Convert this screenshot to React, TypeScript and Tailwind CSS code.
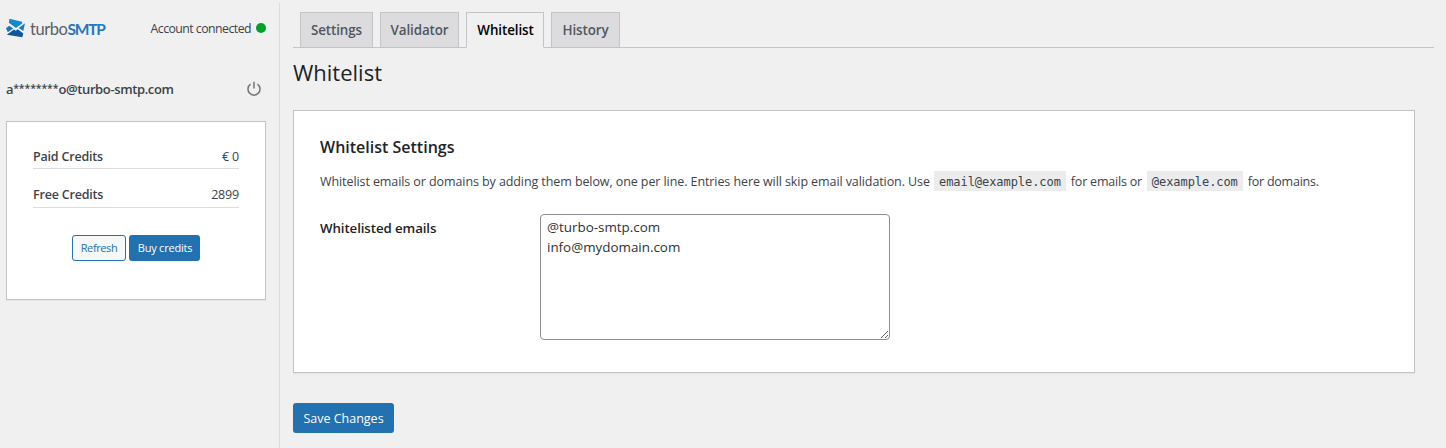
import type { ReactNode } from "react";

function Logo() {
  return (
    <div className="flex items-center">
      <svg width="20" height="20" viewBox="0 0 20 20" className="shrink-0">
        <path d="M3.500 1 15.500 4 18.700 5.500 17.200 14.500 16.200 18.700 1 16.300 .5 10.500 3 8Z" fill="#eef4fa" />
        <path d="M3.500 .8 16 3.800 16.500 5.200 10 10 2.800 4.800Z" fill="#1787cd" />
        <path d="M12.700 9.900 19 5.300 17.300 13Z" fill="#1f77bd" />
        <path d="M0 10.300 3.200 7.800 7.200 10.600 1.800 14.300Z" fill="#1a74ba" />
        <path d="M.8 16.800 8 11.500 9.800 12.700 11.700 11.300 17.300 15.500 16.300 19.200Z" fill="#0d559c" />
      </svg>
      <span className="ml-1 mt-[2px] text-[16.5px] leading-5 tracking-[-0.45px] text-[#5a6068] font-['Lato']">
        turbo<span className="text-[15.5px] font-bold tracking-[-1.2px] text-[#1f78c1]">SMTP</span>
      </span>
    </div>
  );
}

function CreditRow({ label, value, leading }: { label: string; value: string; leading: string }) {
  return (
    <div
      className={`flex h-[25px] items-start justify-between border-b border-[#dcdcde] text-[12.5px] tracking-[-0.19px] ${leading}`}
    >
      <span className="font-semibold">{label}</span>
      <span>{value}</span>
    </div>
  );
}

function Tab({ label, width, active }: { label: string; width: string; active?: boolean }) {
  return (
    <div
      className={`${width} h-9 border border-[#c3c4c7] text-center text-[13.4px] font-semibold leading-[35px] tracking-[-0.1px] ${
        active ? "border-b-[#f0f0f1] bg-[#f0f0f0] pl-px text-black" : "bg-[#dcdcde] text-[#50575e]"
      }`}
    >
      {label}
    </div>
  );
}

function Code({ children }: { children: ReactNode }) {
  return (
    <code className="mx-px h-5 bg-[#ececed] px-[5px] font-['DejaVu_Sans_Mono'] text-[12px] leading-[22px] tracking-[-0.06px]">
      {children}
    </code>
  );
}

export default function App() {
  return (
    <div className="flex h-[448px] w-[1446px] overflow-hidden bg-[#f0f0f0] font-['Open_Sans',sans-serif] text-[#3c434a]">
      <aside className="w-[280px] shrink-0 pl-1.5 pr-[14px]">
        <div className="mt-[18px] flex h-5 items-center justify-between">
          <Logo />
          <div className="flex items-center gap-[5px]">
            <span className="pt-[2px] text-[12.3px] leading-5 tracking-[-0.54px]">Account connected</span>
            <span className="size-[10px] rounded-full bg-[#00a32a]" />
          </div>
        </div>
        <div className="mt-[41px] flex h-5 items-center justify-between pr-1">
          <span className="text-[13px] font-semibold leading-5 tracking-[-0.38px]">
            a<span className="align-[2px] text-[10.5px] leading-none tracking-[-0.1px]">********</span>o@turbo-smtp.com
          </span>
          <svg width="16" height="16" viewBox="0 0 16 16" fill="none" stroke="#707378" strokeWidth="1.5">
            <path d="M8 .8v6.700M4.600 3.200a6 6 0 1 0 6.800 0" />
          </svg>
        </div>
        <div className="mt-[22px] h-[179px] w-[260px] border border-[#c3c4c7] bg-white px-[26px] pt-[22px] shadow-[0_1px_1px_rgba(0,0,0,0.04)]">
          <div className="flex flex-col gap-3.5">
            <CreditRow label="Paid Credits" value="€ 0" leading="leading-[25px]" />
            <CreditRow label="Free Credits" value="2899" leading="leading-[24px]" />
          </div>
          <div className="mt-[27px] flex justify-center gap-[3px]">
            <button className="h-[26px] w-[54px] rounded-[3px] border border-[#2271b1] bg-[#f6f7f7] text-[11px] tracking-[-0.4px] text-[#2271b1]">
              Refresh
            </button>
            <button className="h-[26px] w-[71px] rounded-[3px] bg-[#2271b1] pl-px text-[11px] tracking-[-0.22px] text-white">
              Buy credits
            </button>
          </div>
        </div>
      </aside>
      <div className="-ml-px mt-[3px] w-px shrink-0 bg-[#dcdcde]" />
      <main className="ml-[13px] w-[1141px]">
        <div className="mt-3 flex h-9 gap-[7px] border-b border-[#c3c4c7] pl-[7px]">
          <Tab label="Settings" width="w-[73px]" />
          <Tab label="Validator" width="w-[79px]" />
          <Tab label="Whitelist" width="w-[78px]" active />
          <Tab label="History" width="w-[69px]" />
        </div>
        <h1 className="mt-[9px] text-[22px] leading-[30px] text-[#1d2327]">Whitelist</h1>
        <section className="mt-[23px] h-[263px] w-[1122px] border border-[#c3c4c7] bg-white px-[26px] pt-[24px] shadow-[0_1px_1px_rgba(0,0,0,0.04)]">
          <h2 className="text-[16px] font-semibold leading-6 text-[#1d2327]">Whitelist Settings</h2>
          <p className="mt-3 flex h-5 items-start whitespace-pre text-[12.5px] leading-[21px] tracking-[-0.088px]">
            <span className="w-[613px]">
              Whitelist emails or domains by adding them below, one per line. Entries here will skip email validation. Use
            </span>
            <Code>email@example.com</Code>
            <span className="ml-1 w-[75px] tracking-[-0.2px]">for emails or</span>
            <Code>@example.com</Code>
            <span className="ml-1 tracking-[-0.24px]">for domains.</span>
          </p>
          <div className="mt-[23px] flex">
            <label className="w-[220px] pt-1 text-[13.3px] font-semibold leading-5 tracking-[-0.1px] text-[#1d2327]">
              Whitelisted emails
            </label>
            <textarea
              className="block h-[126px] w-[350px] resize rounded border border-[#8c8f94] bg-white px-1.5 py-[2px] text-[13.4px] leading-5 text-[#2c3338]"
              defaultValue={"@turbo-smtp.com\ninfo@mydomain.com"}
            />
          </div>
        </section>
        <button className="mt-[30px] h-[30px] w-[101px] rounded-[3px] bg-[#2271b1] pt-[2px] text-[12.5px] text-white">
          Save Changes
        </button>
      </main>
    </div>
  );
}
